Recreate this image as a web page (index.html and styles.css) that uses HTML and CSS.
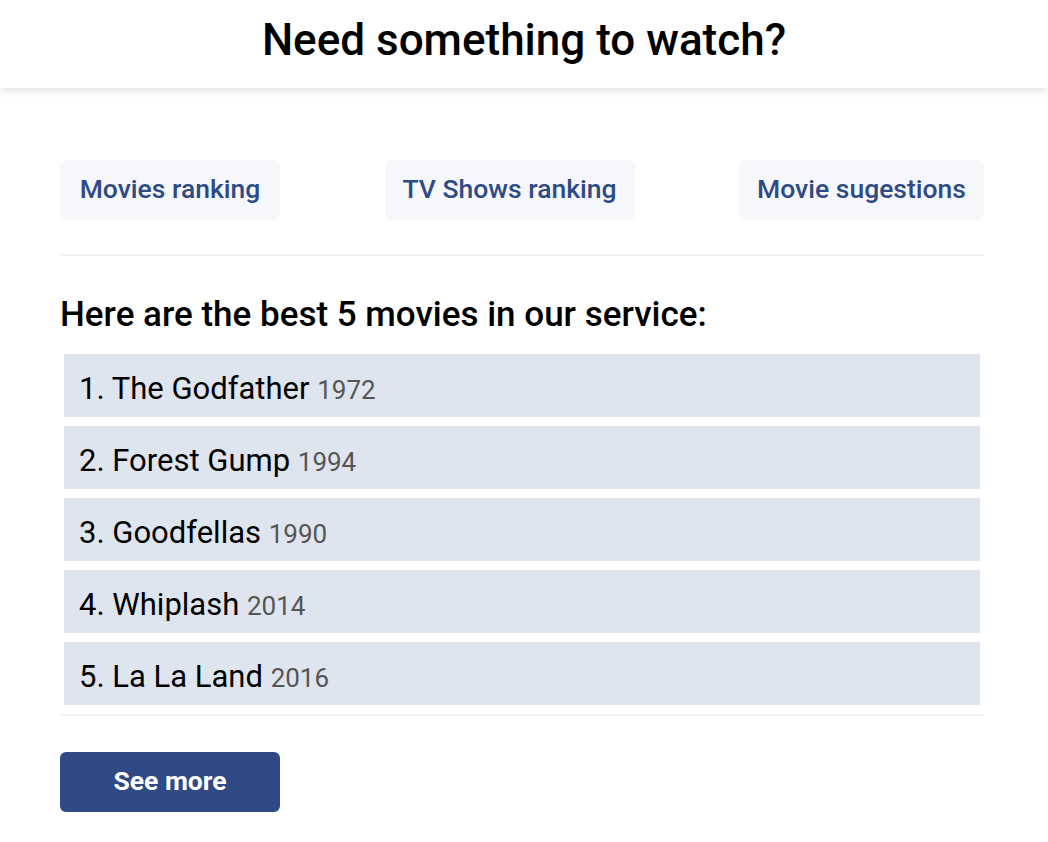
FILE: index.html
```html
<!DOCTYPE html>
<html lang="en">
<head>
<meta charset="utf-8">
<title>Need something to watch?</title>
<link rel="stylesheet" href="styles.css">
</head>
<body>
<header class="header">
  <h1 class="title">Need something to watch?</h1>
</header>
<main class="main">
  <nav class="tabs">
    <a class="tab" href="#">Movies ranking</a>
    <a class="tab" href="#">TV Shows ranking</a>
    <a class="tab" href="#">Movie sugestions</a>
  </nav>
  <hr class="divider">
  <h2 class="subtitle">Here are the best 5 movies in our service:</h2>
  <ol class="list">
    <li class="item">1. The Godfather <span class="year">1972</span></li>
    <li class="item">2. Forest Gump <span class="year">1994</span></li>
    <li class="item">3. Goodfellas <span class="year">1990</span></li>
    <li class="item">4. Whiplash <span class="year">2014</span></li>
    <li class="item">5. La La Land <span class="year">2016</span></li>
  </ol>
  <hr class="divider divider-bottom">
  <button class="more">See more</button>
</main>
</body>
</html>
```

FILE: styles.css
```css
* { box-sizing: border-box; }
body {
  margin: 0;
  font-family: Roboto, "Liberation Sans", sans-serif;
  background: #fff;
  color: #000;
}
.header {
  height: 88px;
  display: flex;
  align-items: center;
  justify-content: center;
  box-shadow: 0 2px 8px rgba(0, 0, 0, 0.12);
  background: #fff;
}
.title {
  margin: 0;
  font-size: 44px;
  font-weight: 500;
  line-height: 44px;
  padding-bottom: 8px;
}
.main {
  width: 924px;
  margin: 0 0 0 60px;
  padding-top: 72px;
}
.tabs {
  display: flex;
  justify-content: space-between;
}
.tab {
  height: 60px;
  min-width: 220px;
  padding: 0 18px 4px;
  display: flex;
  align-items: center;
  justify-content: center;
  background: #f5f7fa;
  border-radius: 6px;
  color: #2f4a84;
  text-decoration: none;
  font-size: 26.5px;
  font-weight: 500;
}
.divider {
  display: block;
  margin: 34px 0 0;
  border: 0;
  height: 2px;
  background: #eef1f6;
}
.subtitle {
  margin: 0;
  padding-top: 39px;
  font-size: 35px;
  font-weight: 500;
  line-height: 40px;
}
.list {
  list-style: none;
  margin: 19px 4px 0;
  padding: 0;
  display: flex;
  flex-direction: column;
  gap: 9px;
}
.item {
  height: 63px;
  background: #dfe5ee;
  padding: 8px 15px 0;
  line-height: 54px;
  font-size: 31px;
}
.item .year {
  font-size: 26px;
  color: #555;
}
.divider-bottom {
  margin-top: 9px;
}
.more {
  display: block;
  margin-top: 36px;
  width: 220px;
  height: 60px;
  padding: 0 0 4px;
  border: 0;
  border-radius: 6px;
  background: #2f4a84;
  color: #fff;
  font-family: inherit;
  font-size: 26.5px;
  font-weight: 700;
}
```
